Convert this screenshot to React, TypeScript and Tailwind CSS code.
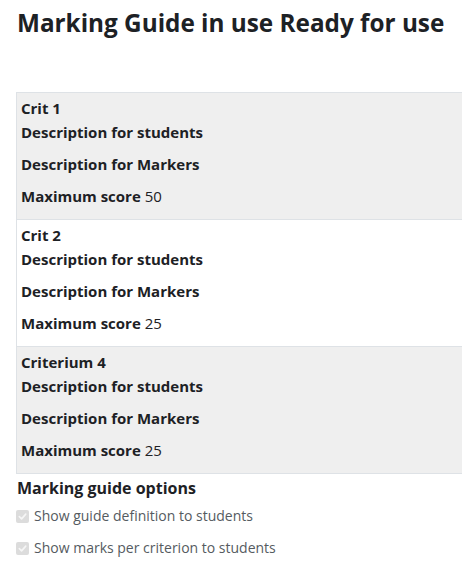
const criteria = [
  { name: "Crit 1", score: 50, striped: true },
  { name: "Crit 2", score: 25, striped: false },
  { name: "Criterium 4", score: 25, striped: true },
];

function DisabledCheck({ label }: { label: string }) {
  return (
    <div className="flex items-center h-[22px] mb-[10px]">
      <span className="w-[13px] h-[13px] ml-[16px] mr-[5px] rounded-[2px] bg-[#dcdcdc] flex items-center justify-center">
        <svg width="9" height="9" viewBox="0 0 10 10" fill="none">
          <path d="M1.5 5.2 L4 7.6 L8.6 2.4" stroke="#f6f6f6" strokeWidth="1.8" strokeLinecap="round" strokeLinejoin="round" />
        </svg>
      </span>
      <span className="text-[14px] text-[#555b61]">{label}</span>
    </div>
  );
}

export default function App() {
  return (
    <div
      className="w-[462px] h-[566px] overflow-hidden bg-white text-[#1d2125] text-[15px] leading-[22px]"
      style={{ fontFamily: '"Segoe UI", "Open Sans", sans-serif' }}
    >
      {/* Heading */}
      <h2 className="pl-[17px] pt-[6px] text-[24.3px] leading-[34px] font-bold">
        Marking Guide in use Ready for use
      </h2>

      {/* Criteria table */}
      <div className="ml-[16px] mt-[52px] w-[460px] border-l border-[#dee2e6]">
        {criteria.map((c) => (
          <div
            key={c.name}
            className={`border-t border-[#dee2e6] pl-[4px] pt-[4px] pb-[2px] ${c.striped ? "bg-[#efefef]" : "bg-white"}`}
          >
            <div className="font-bold mb-[2px]">{c.name}</div>
            <div className="font-bold mb-[10px]">Description for students</div>
            <div className="font-bold mb-[10px]">Description for Markers</div>
            <div className="mb-[10px]">
              <span className="font-bold">Maximum score</span> {c.score}
            </div>
          </div>
        ))}
        <div className="border-t border-[#dee2e6]" />
      </div>

      {/* Options */}
      <div className="pl-[17px] pt-[3px] text-[16px] leading-[22px] font-bold mb-[6px]">
        Marking guide options
      </div>
      <DisabledCheck label="Show guide definition to students" />
      <DisabledCheck label="Show marks per criterion to students" />
    </div>
  );
}
